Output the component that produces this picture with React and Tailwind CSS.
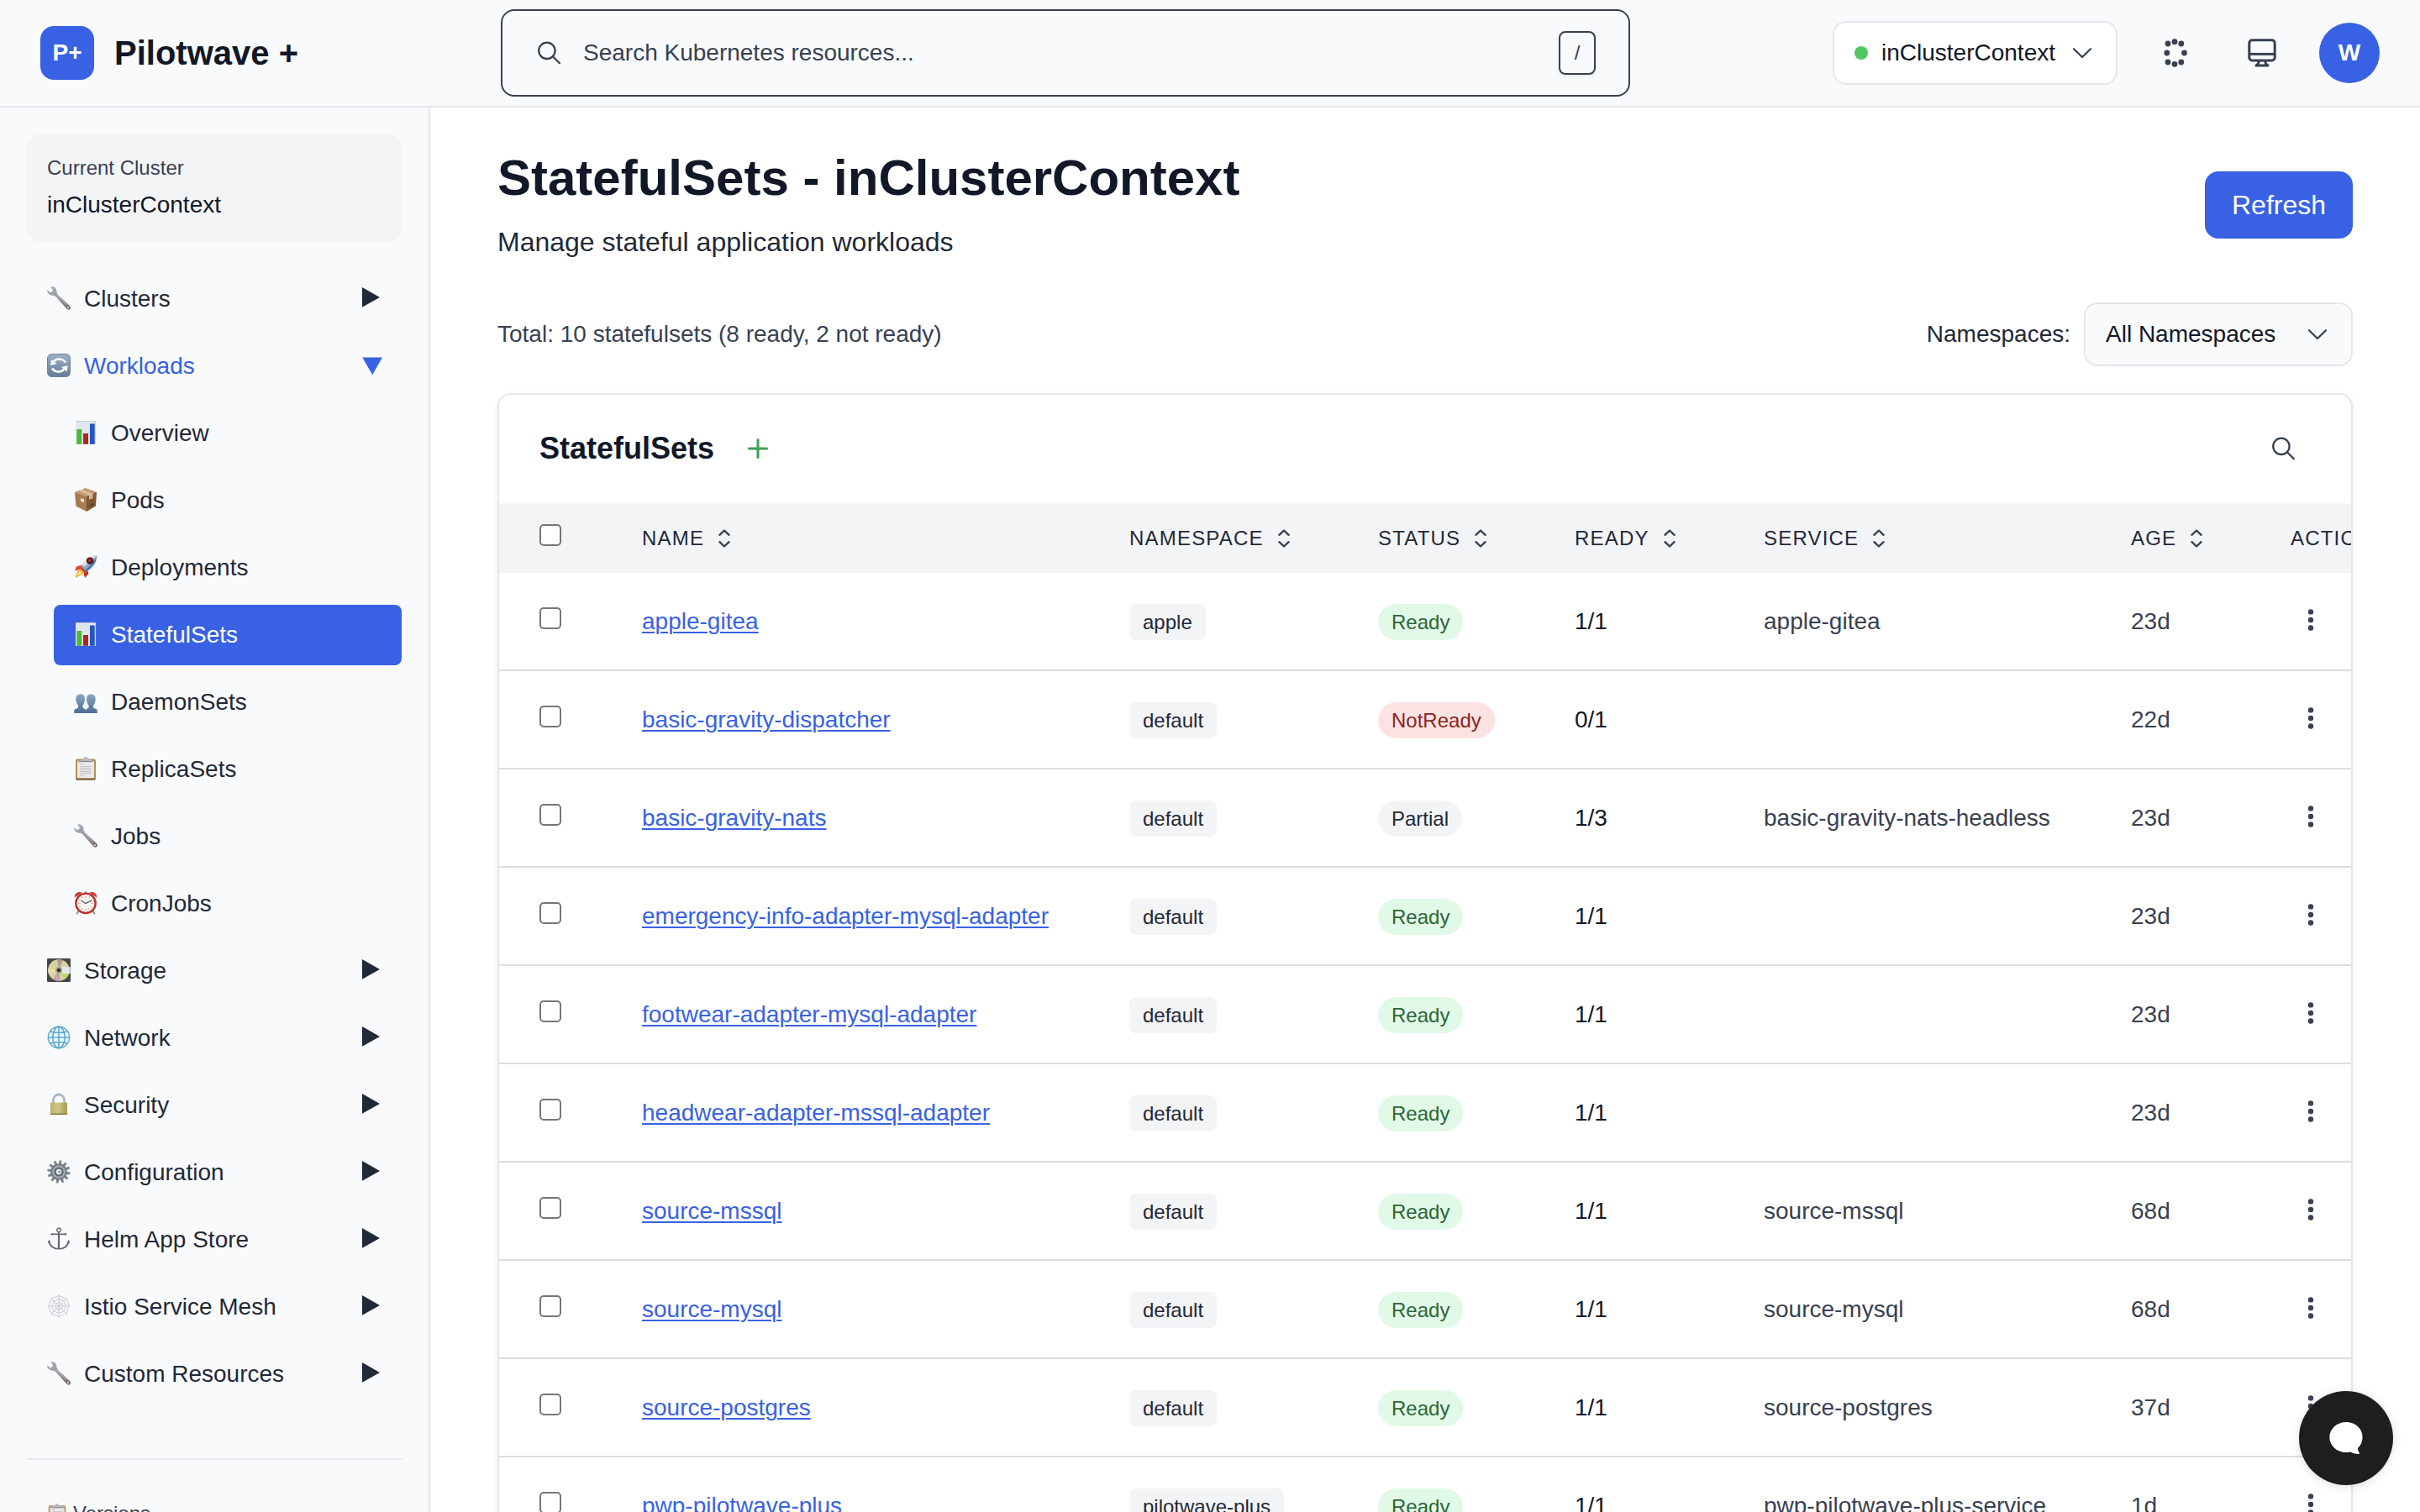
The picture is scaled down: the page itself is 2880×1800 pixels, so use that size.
import React from "react";

/* ---------- Sidebar pictograms (28 x 28 grid) ---------- */

function Wrench() {
  return (
    <svg viewBox="0 0 28 28" className="size-7">
      <defs>
        <linearGradient id="wr" x1="0" y1="0" x2="1" y2="1">
          <stop offset="0" stopColor="#a9b3bf" />
          <stop offset=".45" stopColor="#98979f" />
          <stop offset="1" stopColor="#6d6062" />
        </linearGradient>
      </defs>
      <path
        d="M4 .8 C7 -.6 10.500 1.200 11.200 4 C11.500 5.400 11.300 6.500 11.600 7.600 C12 9 13.500 10.500 15 12 L26.600 22.800 C28.200 24.400 28.200 26 27.200 27 C26.200 28 24.600 28 23.300 26.600 L11.600 13.400 C10.300 12 9.300 10.900 7.800 10.700 C6.600 10.600 5.400 10.900 4 10.300 C1.400 9.200 -.3 7 .3 4.300 L3.300 6.700 C4 7.200 4.900 7.100 5.500 6.500 L6.500 5.200 C7 4.500 6.900 3.600 6.300 3.100 Z"
        fill="url(#wr)"
      />
      <path d="M11.600 10 L23.500 22.300" stroke="#c4c6cd" strokeWidth="1" />
      <circle cx="25" cy="25" r="1.100" fill="#e4e4e8" />
    </svg>
  );
}

function Cycle() {
  return (
    <svg viewBox="0 0 28 28" className="size-7">
      <defs>
        <linearGradient id="cy" x1="0" y1="0" x2="0" y2="1">
          <stop offset="0" stopColor="#9db2c9" />
          <stop offset="1" stopColor="#667c96" />
        </linearGradient>
      </defs>
      <rect x=".5" y=".5" width="27" height="27" rx="5" fill="url(#cy)" stroke="#6f8299" />
      <path d="M7 12 C8.500 5.500 17.500 4.500 22 10.500" fill="none" stroke="#fff" strokeWidth="2.600" />
      <path d="M21 16 C19.500 22.500 10.500 23.500 6 17.500" fill="none" stroke="#fff" strokeWidth="2.600" />
      <path d="M4 13.800 L5.200 7 L11.500 12.300 Z" fill="#fff" />
      <path d="M24.700 14.300 L23.500 21.200 L17 16 Z" fill="#fff" />
    </svg>
  );
}

function Chart() {
  return (
    <svg viewBox="0 0 28 28" className="size-7">
      <rect x="2" y="0" width="24" height="28" fill="#dfe6ef" />
      <path d="M2 .5 H26" stroke="#c9ced6" />
      <path d="M25.600 0 V28" stroke="#c2cbd8" strokeWidth=".8" />
      <rect x="3.300" y="10" width="6" height="17.800" fill="#55b53a" />
      <rect x="11" y="15" width="6" height="12.800" fill="#ab2620" />
      <rect x="19" y="3.500" width="5.700" height="24.300" fill="#2457bd" />
    </svg>
  );
}

function Box() {
  return (
    <svg viewBox="0 0 28 28" className="size-7">
      <path d="M14 0 L27 4.700 L15 10 L1 4.800 Z" fill="#c39a6c" />
      <path d="M1 4.800 L15 10 V28 L2.400 21.500 Z" fill="#a97c50" />
      <path d="M27 4.700 L15 10 V28 L26 21.500 Z" fill="#805732" />
      <path d="M9.500 1.700 L22.500 6.800 V12.200 L18 13.800 V8.700 L5.500 3.200 Z" fill="#dcc6a6" opacity=".85" />
      <path d="M8 12 L12 13.600 V17.400 L8 15.600 Z" fill="#e6e3df" />
      <path d="M19.500 19.500 L23 18 V20.500 L19.500 22 Z" fill="#553718" />
    </svg>
  );
}

function Rocket() {
  return (
    <svg viewBox="0 0 28 28" className="size-7">
      <path d="M9.500 11.500 L3 13.500 L1 18.500 L8 17 Z" fill="#dd4a2c" />
      <path d="M16.500 18.500 L17.500 22 L13 27 L11.500 20.500 Z" fill="#c93224" />
      <path d="M7.200 16 L4 20 L1.200 26.800 L8 24 L11.800 20.800 Z" fill="#f5a72c" />
      <path d="M6.800 18.500 L2.800 25 L9.500 21.200 Z" fill="#fde98a" />
      <path d="M27.500 .3 C21 .6 14 3.500 7.500 15.800 L12.500 20.800 C23.500 15.500 27.500 8 27.500 .3 Z" fill="#8fa9c4" />
      <path d="M27.500 .3 C21 .6 15 4 10 11.500 L12.500 13.500 Z" fill="#d4e0ec" />
      <path d="M25.500 5 C23.500 10 19 15 12.500 19.500" fill="none" stroke="#3d78b4" strokeWidth="2.200" />
      <path d="M7.500 15.800 L12.500 20.800 L14.600 19.400 L9 13.600 Z" fill="#c53d2b" />
      <circle cx="19" cy="6.600" r="4.100" fill="#541916" />
      <circle cx="18.800" cy="6.300" r="1.900" fill="#a93a33" />
    </svg>
  );
}

function Busts() {
  return (
    <svg viewBox="0 0 28 28" className="size-7">
      <defs>
        <linearGradient id="bu" x1="0" y1="0" x2="0" y2="1">
          <stop offset="0" stopColor="#8ca8c4" />
          <stop offset="1" stopColor="#4a6c91" />
        </linearGradient>
      </defs>
      <path
        d="M7.700 5.300 C11.500 5.300 13.300 8.200 13 11.700 C12.800 14.500 11.800 17.200 10.400 18.700 V21.500 C11.500 22.500 14 22.600 14.200 25 V28 H.3 V24.800 C.6 22.600 4 22.600 5 21.500 V18.700 C3.600 17.200 2.500 14.500 2.300 11.700 C2 8.200 4 5.300 7.700 5.300 Z"
        fill="url(#bu)"
      />
      <path
        d="M20.300 5.300 C24 5.300 26 8.200 25.700 11.700 C25.500 14.500 24.500 17.200 23 18.700 V21.500 C24 22.600 27.400 22.600 27.700 24.800 V28 H14 V24.800 C14.300 22.600 16.500 22.500 17.600 21.500 V18.700 C16.200 17.200 15.200 14.500 15 11.700 C14.700 8.200 16.500 5.300 20.300 5.300 Z"
        fill="url(#bu)"
      />
    </svg>
  );
}

function Clipboard() {
  return (
    <svg viewBox="0 0 28 28" className="size-full">
      <rect x="2" y="2.500" width="24" height="25.300" rx="2.200" fill="#b98d50" />
      <rect x="4" y="5" width="20" height="20.800" fill="#e9e9e9" />
      <rect x="2.600" y="25.400" width="22.800" height="2" rx="1" fill="#7e5c33" />
      <path d="M7 8.800 H11 M7 11.500 H21 M7 13.500 H20.500 M7 15.500 H21 M7 17.500 H20 M7 19.500 H21 M7 22 H12" stroke="#c6c6c8" strokeWidth="1.200" />
      <path d="M5.500 5.800 V4.600 C5.500 3.300 9.500 3.600 11 3 C11.500 .8 12.500 .3 14 .3 S16.500 .8 17 3 C18.500 3.600 22.500 3.300 22.500 4.600 V5.800 Z" fill="#b4bac2" />
      <path d="M5.500 5.600 H22.500" stroke="#7c7f86" />
    </svg>
  );
}

function Alarm() {
  return (
    <svg viewBox="0 0 28 28" className="size-7">
      <path d="M5.500 23.500 L3.300 27.300 M22.500 23.500 L24.700 27.300" stroke="#8b8f93" strokeWidth="1.800" />
      <path d="M14 0 V3" stroke="#9a9a9a" strokeWidth="2" />
      <path d="M.8 7.500 C.2 3 4.500 -.6 10 1.600 Z" fill="#c23b35" />
      <path d="M27.200 7.500 C27.800 3 23.500 -.6 18 1.600 Z" fill="#c23b35" />
      <circle cx="14" cy="14.300" r="11.700" fill="#f8f7f6" stroke="#b9322d" strokeWidth="2.400" />
      <path
        d="M14 4.800 V8 M14 20.600 V23.800 M4.500 14.300 H7.700 M20.300 14.300 H23.500 M9.200 6 L10.800 8.800 M18.800 6 L17.200 8.800 M9.200 22.600 L10.800 19.800 M18.800 22.600 L17.200 19.800 M5.800 9.500 L8.500 11.100 M5.800 19.100 L8.500 17.500 M22.200 19.100 L19.500 17.500"
        stroke="#e2a19d"
        strokeWidth="1"
      />
      <path d="M8.600 11 L14 14.600 L21.800 10.600" fill="none" stroke="#4a4a4a" strokeWidth="1.100" />
    </svg>
  );
}

function Disc() {
  return (
    <svg viewBox="0 0 28 28" className="size-7">
      <rect width="28" height="28" rx="1.200" fill="#44474a" />
      <circle cx="14" cy="14" r="12.800" fill="#dcd3a0" />
      <path d="M14 14 L6 4 A12.800 12.800 0 0 1 12 1.400 Z" fill="#c9d9a0" />
      <path d="M14 14 L12 1.400 A12.800 12.800 0 0 1 19 2.300 Z" fill="#b79a94" />
      <path d="M14 14 L16 26.600 A12.800 12.800 0 0 1 7 24.700 Z" fill="#c3a2b4" />
      <path d="M14 14 L26 18 A12.800 12.800 0 0 1 20.500 25 Z" fill="#b5dc6a" />
      <path d="M14 14 L2.600 19.500 A12.800 12.800 0 0 1 1.500 11.500 Z" fill="#e4dfae" />
      <rect x="18" y="10" width="9.600" height="8" rx=".8" fill="#e3e5e7" />
      <circle cx="14" cy="14" r="4" fill="#a7a68f" />
      <circle cx="14" cy="14" r="2.200" fill="#2c2d2e" />
    </svg>
  );
}

function Globe() {
  return (
    <svg viewBox="0 0 28 28" className="size-7">
      <circle cx="14" cy="14" r="12.700" fill="#eaf6fc" stroke="#62acd0" strokeWidth="1.500" />
      <g fill="none" stroke="#5ba6cc" strokeWidth="1.500">
        <ellipse cx="14" cy="14" rx="7.200" ry="12.700" />
        <path d="M14 1.300 V26.700 M1.300 14 H26.700 M3.500 6.800 C9 9.200 19 9.200 24.500 6.800 M3.500 21.200 C9 18.800 19 18.800 24.500 21.200" />
      </g>
    </svg>
  );
}

function Lock() {
  return (
    <svg viewBox="0 0 28 28" className="size-7">
      <defs>
        <linearGradient id="lk" x1="0" y1="0" x2="1" y2="0">
          <stop offset="0" stopColor="#b9b26b" />
          <stop offset=".45" stopColor="#cfc984" />
          <stop offset="1" stopColor="#a39b52" />
        </linearGradient>
      </defs>
      <path d="M7.400 13 V9.500 C7.400 -.5 20.600 -.5 20.600 9.500 V13" fill="none" stroke="#a9b8c6" strokeWidth="2.800" />
      <rect x="4" y="11.500" width="20" height="14.500" rx="1" fill="url(#lk)" />
      <rect x="4" y="24.500" width="20" height="1.500" fill="#857c3a" />
    </svg>
  );
}

function Gear() {
  const teeth = [0, 30, 60, 90, 120, 150, 180, 210, 240, 270, 300, 330];
  return (
    <svg viewBox="0 0 28 28" className="size-7">
      {teeth.map((a) => (
        <path key={a} d="M12.300 5 L12.900 .3 H15.400 L15.900 5 Z" fill="#7f8791" transform={`rotate(${a + 8} 14 14)`} />
      ))}
      <circle cx="14" cy="14" r="8.800" fill="#a3abb4" stroke="#727b85" strokeWidth="2" />
      <circle cx="14" cy="14" r="5" fill="#7b848c" stroke="#59636c" strokeWidth="1.200" />
      <circle cx="14" cy="14" r="3" fill="#eef0f2" />
      <circle cx="14.600" cy="14" r="1.100" fill="#4d545b" />
    </svg>
  );
}

function Anchor() {
  return (
    <svg viewBox="0 0 28 28" className="size-7">
      <g fill="none" stroke="#65686c">
        <circle cx="14" cy="3.300" r="2.300" strokeWidth="1.300" />
        <path d="M14 5.500 V26" strokeWidth="2.200" />
        <path d="M6 8.300 H22" strokeWidth="1.600" />
        <path d="M2.500 17.500 C4.500 28.500 23.500 28.500 25.500 17.500" strokeWidth="1.700" />
      </g>
      <path d="M2.300 14.800 L.6 18.800 L4.400 18.200 Z M25.700 14.800 L27.400 18.800 L23.600 18.200 Z" fill="#65686c" />
      <circle cx="6" cy="8.300" r="1.300" fill="#65686c" />
      <circle cx="22" cy="8.300" r="1.300" fill="#65686c" />
    </svg>
  );
}

function Web() {
  const ring = (r) =>
    [0, 1, 2, 3, 4, 5, 6, 7]
      .map((i) => {
        const a = (i * Math.PI) / 4;
        return `${14 + r * Math.sin(a)},${14 - r * Math.cos(a)}`;
      })
      .join(" ");
  return (
    <svg viewBox="0 0 28 28" className="size-7">
      <g fill="none" stroke="#c4c5c8" strokeWidth=".9">
        <path d="M14 .5 V27.500 M.5 14 H27.500 M4.500 4.500 L23.500 23.500 M23.500 4.500 L4.500 23.500" />
        <polygon points={ring(12.500)} />
        <polygon points={ring(8.500)} />
        <polygon points={ring(4.500)} />
      </g>
    </svg>
  );
}

/* ---------- Line icons ---------- */

function SearchIcon() {
  return (
    <svg viewBox="0 0 28 28" className="size-7 shrink-0" fill="none" stroke="#374151" strokeWidth="2.300" strokeLinecap="round">
      <circle cx="10.900" cy="11.300" r="9.700" />
      <path d="M17.900 18.300 L25.900 26.300" />
    </svg>
  );
}

function Chevron() {
  return (
    <svg viewBox="0 0 24 14" className="h-3.5 w-6 shrink-0" fill="none" stroke="#374151" strokeWidth="2.300" strokeLinecap="round" strokeLinejoin="round">
      <path d="M2 2.200 L12 12 L22 2.200" />
    </svg>
  );
}

function SortIcon() {
  return (
    <svg viewBox="0 0 16 24" className="h-6 w-4 shrink-0" fill="none" stroke="#374151" strokeWidth="2.400" strokeLinecap="round" strokeLinejoin="round">
      <path d="M2.400 7.800 L8 2.500 L13.600 7.800 M2.400 16.200 L8 21.500 L13.600 16.200" />
    </svg>
  );
}

function DotRing() {
  const dots = [[8, 6], [16, 3.700], [23.800, 6], [6.800, 17], [27.500, 17], [8, 28], [16, 30.300], [23.800, 28]];
  return (
    <svg viewBox="0 0 32 34" className="h-[34px] w-8" fill="#374151">
      {dots.map(([x, y]) => (
        <circle key={`${x}-${y}`} cx={x} cy={y} r="3.400" />
      ))}
    </svg>
  );
}

function Monitor() {
  return (
    <svg viewBox="0 0 34 34" className="size-[34px]" fill="none" stroke="#374151" strokeWidth="3" strokeLinejoin="round">
      <rect x="1.800" y="1.800" width="30.400" height="24.200" rx="3.600" />
      <path d="M2 18.400 H32" />
      <path d="M13.500 26 L12.500 30 L10 32 H24 L21.500 30 L20.500 26" />
    </svg>
  );
}

/* ---------- Data ---------- */

const nav = [
  { icon: Wrench, label: "Clusters" },
  { icon: Cycle, label: "Workloads", open: true },
  { icon: Chart, label: "Overview", sub: true },
  { icon: Box, label: "Pods", sub: true },
  { icon: Rocket, label: "Deployments", sub: true },
  { icon: Chart, label: "StatefulSets", sub: true, active: true },
  { icon: Busts, label: "DaemonSets", sub: true },
  { icon: Clipboard, label: "ReplicaSets", sub: true },
  { icon: Wrench, label: "Jobs", sub: true },
  { icon: Alarm, label: "CronJobs", sub: true },
  { icon: Disc, label: "Storage" },
  { icon: Globe, label: "Network" },
  { icon: Lock, label: "Security" },
  { icon: Gear, label: "Configuration" },
  { icon: Anchor, label: "Helm App Store" },
  { icon: Web, label: "Istio Service Mesh" },
  { icon: Wrench, label: "Custom Resources" },
];

const rows = [
  ["apple-gitea", "apple", "Ready", "1/1", "apple-gitea", "23d"],
  ["basic-gravity-dispatcher", "default", "NotReady", "0/1", "", "22d"],
  ["basic-gravity-nats", "default", "Partial", "1/3", "basic-gravity-nats-headless", "23d"],
  ["emergency-info-adapter-mysql-adapter", "default", "Ready", "1/1", "", "23d"],
  ["footwear-adapter-mysql-adapter", "default", "Ready", "1/1", "", "23d"],
  ["headwear-adapter-mssql-adapter", "default", "Ready", "1/1", "", "23d"],
  ["source-mssql", "default", "Ready", "1/1", "source-mssql", "68d"],
  ["source-mysql", "default", "Ready", "1/1", "source-mysql", "68d"],
  ["source-postgres", "default", "Ready", "1/1", "source-postgres", "37d"],
  ["pwp-pilotwave-plus", "pilotwave-plus", "Ready", "1/1", "pwp-pilotwave-plus-service", "1d"],
];

const statusColor = {
  Ready: "bg-[#e1f9e7] text-[#2d6637]",
  NotReady: "bg-[#fae3e2] text-[#8f2320]",
  Partial: "bg-[#f3f4f6] text-[#1f2937]",
};

const grid = "grid grid-cols-[170px_580px_296px_234px_225px_437px_190px_240px]";

/* ---------- Sections ---------- */

function Header() {
  return (
    <header className="flex h-32 w-full shrink-0 items-center border-b-2 border-[#e5e7eb] bg-[#f9fafc] px-12">
      <div className="flex w-[548px] items-center gap-6">
        <div className="flex size-16 items-center justify-center rounded-2xl bg-[#3862e3] text-[28px] font-bold text-white">P+</div>
        <div className="text-[40px] leading-[56px] font-bold text-[#111827]">Pilotwave +</div>
      </div>
      <div className="flex h-[104px] w-[1344px] items-center rounded-2xl border-2 border-[#374151] pr-[39px] pl-[42px]">
        <SearchIcon />
        <span className="ml-[26px] flex-1 text-[28px] leading-10 text-[#374151]">Search Kubernetes resources...</span>
        <kbd className="flex h-[52px] w-[44px] items-center justify-center rounded-lg border-2 border-[#374151] bg-[#f9fafc] text-2xl text-[#374151] shadow-[0_2px_4px_rgba(0,0,0,0.08)] [font-family:'Liberation_Sans',Arial,sans-serif]">/</kbd>
      </div>
      <div className="ml-auto flex items-center gap-8">
        <div className="flex h-[76px] w-[339px] items-center rounded-2xl border-2 border-[#e5e7eb] bg-white pl-6">
          <span className="size-4 rounded-full bg-[#50c860]" />
          <span className="ml-4 flex-1 text-[28px] leading-10 text-[#111827]">inClusterContext</span>
          <span className="mr-7 flex">
            <Chevron />
          </span>
        </div>
        <div className="flex size-[72px] items-center justify-center">
          <DotRing />
        </div>
        <div className="flex size-[72px] items-center justify-center">
          <Monitor />
        </div>
        <div className="flex size-[72px] items-center justify-center rounded-full bg-[#3862e3] text-[28px] font-bold text-white">W</div>
      </div>
    </header>
  );
}

function NavItem({ item }) {
  const Icon = item.icon;
  let tone = "text-[#1f2937]";
  if (item.active) tone = "bg-[#3862e3] text-white";
  else if (item.open) tone = "text-[#3862e3]";
  return (
    <div className={`flex h-[72px] items-center rounded-lg px-6 text-[28px] leading-10 ${item.sub ? "ml-8" : ""} ${tone}`}>
      <span className="mb-0.5 flex size-7 shrink-0">
        <Icon />
      </span>
      <span className="ml-4 flex-1 whitespace-nowrap">{item.label}</span>
      {!item.sub && !item.open && (
        <svg viewBox="0 0 24 28" className="mb-1 h-7 w-6" fill="currentColor">
          <path d="M1 2 L22 14 L1 25.700 Z" />
        </svg>
      )}
      {item.open && (
        <svg viewBox="0 0 26 28" className="-mr-0.5 h-7 w-[26px]" fill="currentColor">
          <path d="M1.300 3.500 H25 L13.200 24.300 Z" />
        </svg>
      )}
    </div>
  );
}

function Sidebar() {
  return (
    <aside className="w-[512px] shrink-0 overflow-hidden border-r-2 border-[#e5e7eb] bg-[#f9fafc] px-8 pt-8">
      <div className="h-32 rounded-2xl bg-[#f3f4f6] px-6 pt-6">
        <div className="text-2xl leading-8 text-[#374151]">Current Cluster</div>
        <div className="mt-2 text-[28px] leading-10 text-[#111827]">inClusterContext</div>
      </div>
      <nav className="mt-8 flex flex-col gap-2">
        {nav.map((item) => (
          <NavItem key={item.label} item={item} />
        ))}
      </nav>
      <div className="mt-16 border-t-2 border-[#e5e7eb] px-6 pt-12">
        <div className="flex h-8 items-center text-2xl leading-8 text-[#374151]">
          <span className="mr-[7px] flex size-6 shrink-0">
            <Clipboard />
          </span>
          Versions
        </div>
      </div>
    </aside>
  );
}

function Checkbox() {
  return <span className="block size-[26px] rounded-[5px] border-2 border-[#767676] bg-white" />;
}

function Kebab() {
  return (
    <svg viewBox="0 0 8 28" className="h-7 w-2" fill="#374151">
      <circle cx="4" cy="4.400" r="3.200" />
      <circle cx="4" cy="14" r="3.200" />
      <circle cx="4" cy="23.500" r="3.200" />
    </svg>
  );
}

function Table() {
  return (
    <section className="mt-8 h-[1500px] w-[2208px] overflow-hidden rounded-2xl border-2 border-[#e5e7eb] bg-white shadow-[0_2px_6px_rgba(0,0,0,0.08)]">
      <div className="flex h-[130px] items-center border-b-2 border-[#f9fafb] pr-[66px] pl-12">
        <h2 className="text-4xl leading-[56px] font-bold text-[#111827]">StatefulSets</h2>
        <svg viewBox="0 0 24 24" className="ml-10 size-6" fill="none" stroke="#41a04f" strokeWidth="3" strokeLinecap="round">
          <path d="M12 1.500 V22.500 M1.500 12 H22.500" />
        </svg>
        <span className="ml-auto flex">
          <SearchIcon />
        </span>
      </div>
      <div className={`${grid} h-[82px] w-[2372px] items-center bg-[#f3f4f6] text-2xl leading-8 tracking-[1.2px] text-[#1f2937]`}>
        <div className="mb-2 pl-12">
          <Checkbox />
        </div>
        {["NAME", "NAMESPACE", "STATUS", "READY", "SERVICE", "AGE"].map((h) => (
          <div key={h} className="flex items-center gap-4">
            {h}
            <SortIcon />
          </div>
        ))}
        <div>ACTIONS</div>
      </div>
      {rows.map((r) => (
        <div key={r[0]} className={`${grid} h-[117px] w-[2372px] items-center border-b-2 border-[#dcdde2] text-[28px] leading-10`}>
          <div className="mb-[7px] pl-12">
            <Checkbox />
          </div>
          <div>
            <a className="text-[#3862e3] underline decoration-2 underline-offset-[3px]">{r[0]}</a>
          </div>
          <div className="flex pt-0.5">
            <span className="flex h-[43px] items-center rounded-lg bg-[#f3f4f6] px-4 text-2xl leading-8 text-[#1f2937]">{r[1]}</span>
          </div>
          <div className="flex pt-0.5">
            <span className={`flex h-[43px] items-center rounded-full px-4 text-2xl leading-8 ${statusColor[r[2]]}`}>{r[2]}</span>
          </div>
          <div className="text-[#111827]">{r[3]}</div>
          <div className="text-[#374151]">{r[4]}</div>
          <div className="text-[#374151]">{r[5]}</div>
          <div className="mb-1 pl-5">
            <Kebab />
          </div>
        </div>
      ))}
    </section>
  );
}

function Main() {
  return (
    <main className="flex-1 overflow-hidden bg-white px-20 pt-12">
      <div className="flex h-[136px] items-center justify-between">
        <div>
          <h1 className="text-[60px] leading-[72px] font-bold text-[#111827]">StatefulSets - inClusterContext</h1>
          <p className="mt-4 text-[32px] leading-[48px] text-[#1f2937]">Manage stateful application workloads</p>
        </div>
        <button className="h-20 w-44 rounded-2xl bg-[#3862e3] text-[32px] text-white">Refresh</button>
      </div>
      <div className="mt-12 flex h-[76px] items-center text-[28px] leading-10">
        <span className="flex-1 text-[#374151]">Total: 10 statefulsets (8 ready, 2 not ready)</span>
        <span className="mr-4 text-[#1f2937]">Namespaces:</span>
        <div className="flex h-[76px] w-80 items-center justify-between rounded-2xl border-2 border-[#e5e7eb] bg-[#f9fafc] pr-7 pl-6 text-[#111827]">
          All Namespaces
          <Chevron />
        </div>
      </div>
      <Table />
    </main>
  );
}

export default function App() {
  return (
    <div className="relative flex h-[1800px] w-[2880px] flex-col overflow-hidden bg-white [font-family:'Liberation_Sans',Arial,sans-serif]">
      <Header />
      <div className="flex min-h-0 flex-1">
        <Sidebar />
        <Main />
      </div>
      <button className="absolute right-8 bottom-8 flex size-28 items-center justify-center rounded-full bg-[#1e1e1e] shadow-[0_2px_12px_rgba(0,0,0,0.12)]">
        <svg viewBox="0 0 40 38" className="h-[38px] w-10" fill="#fff">
          <path d="M20 0 C31 0 39.600 8 39.600 18 C39.600 23.500 37.500 27.500 34 31 C33.800 33 34.500 34.500 35.800 36.500 C36 37.500 35.500 38 34.800 38 C31 38 28 37 25.500 35.500 C23.500 36 22 36 20 36 C9 36 .3 28 .3 18 S9 0 20 0 Z" />
        </svg>
      </button>
    </div>
  );
}
